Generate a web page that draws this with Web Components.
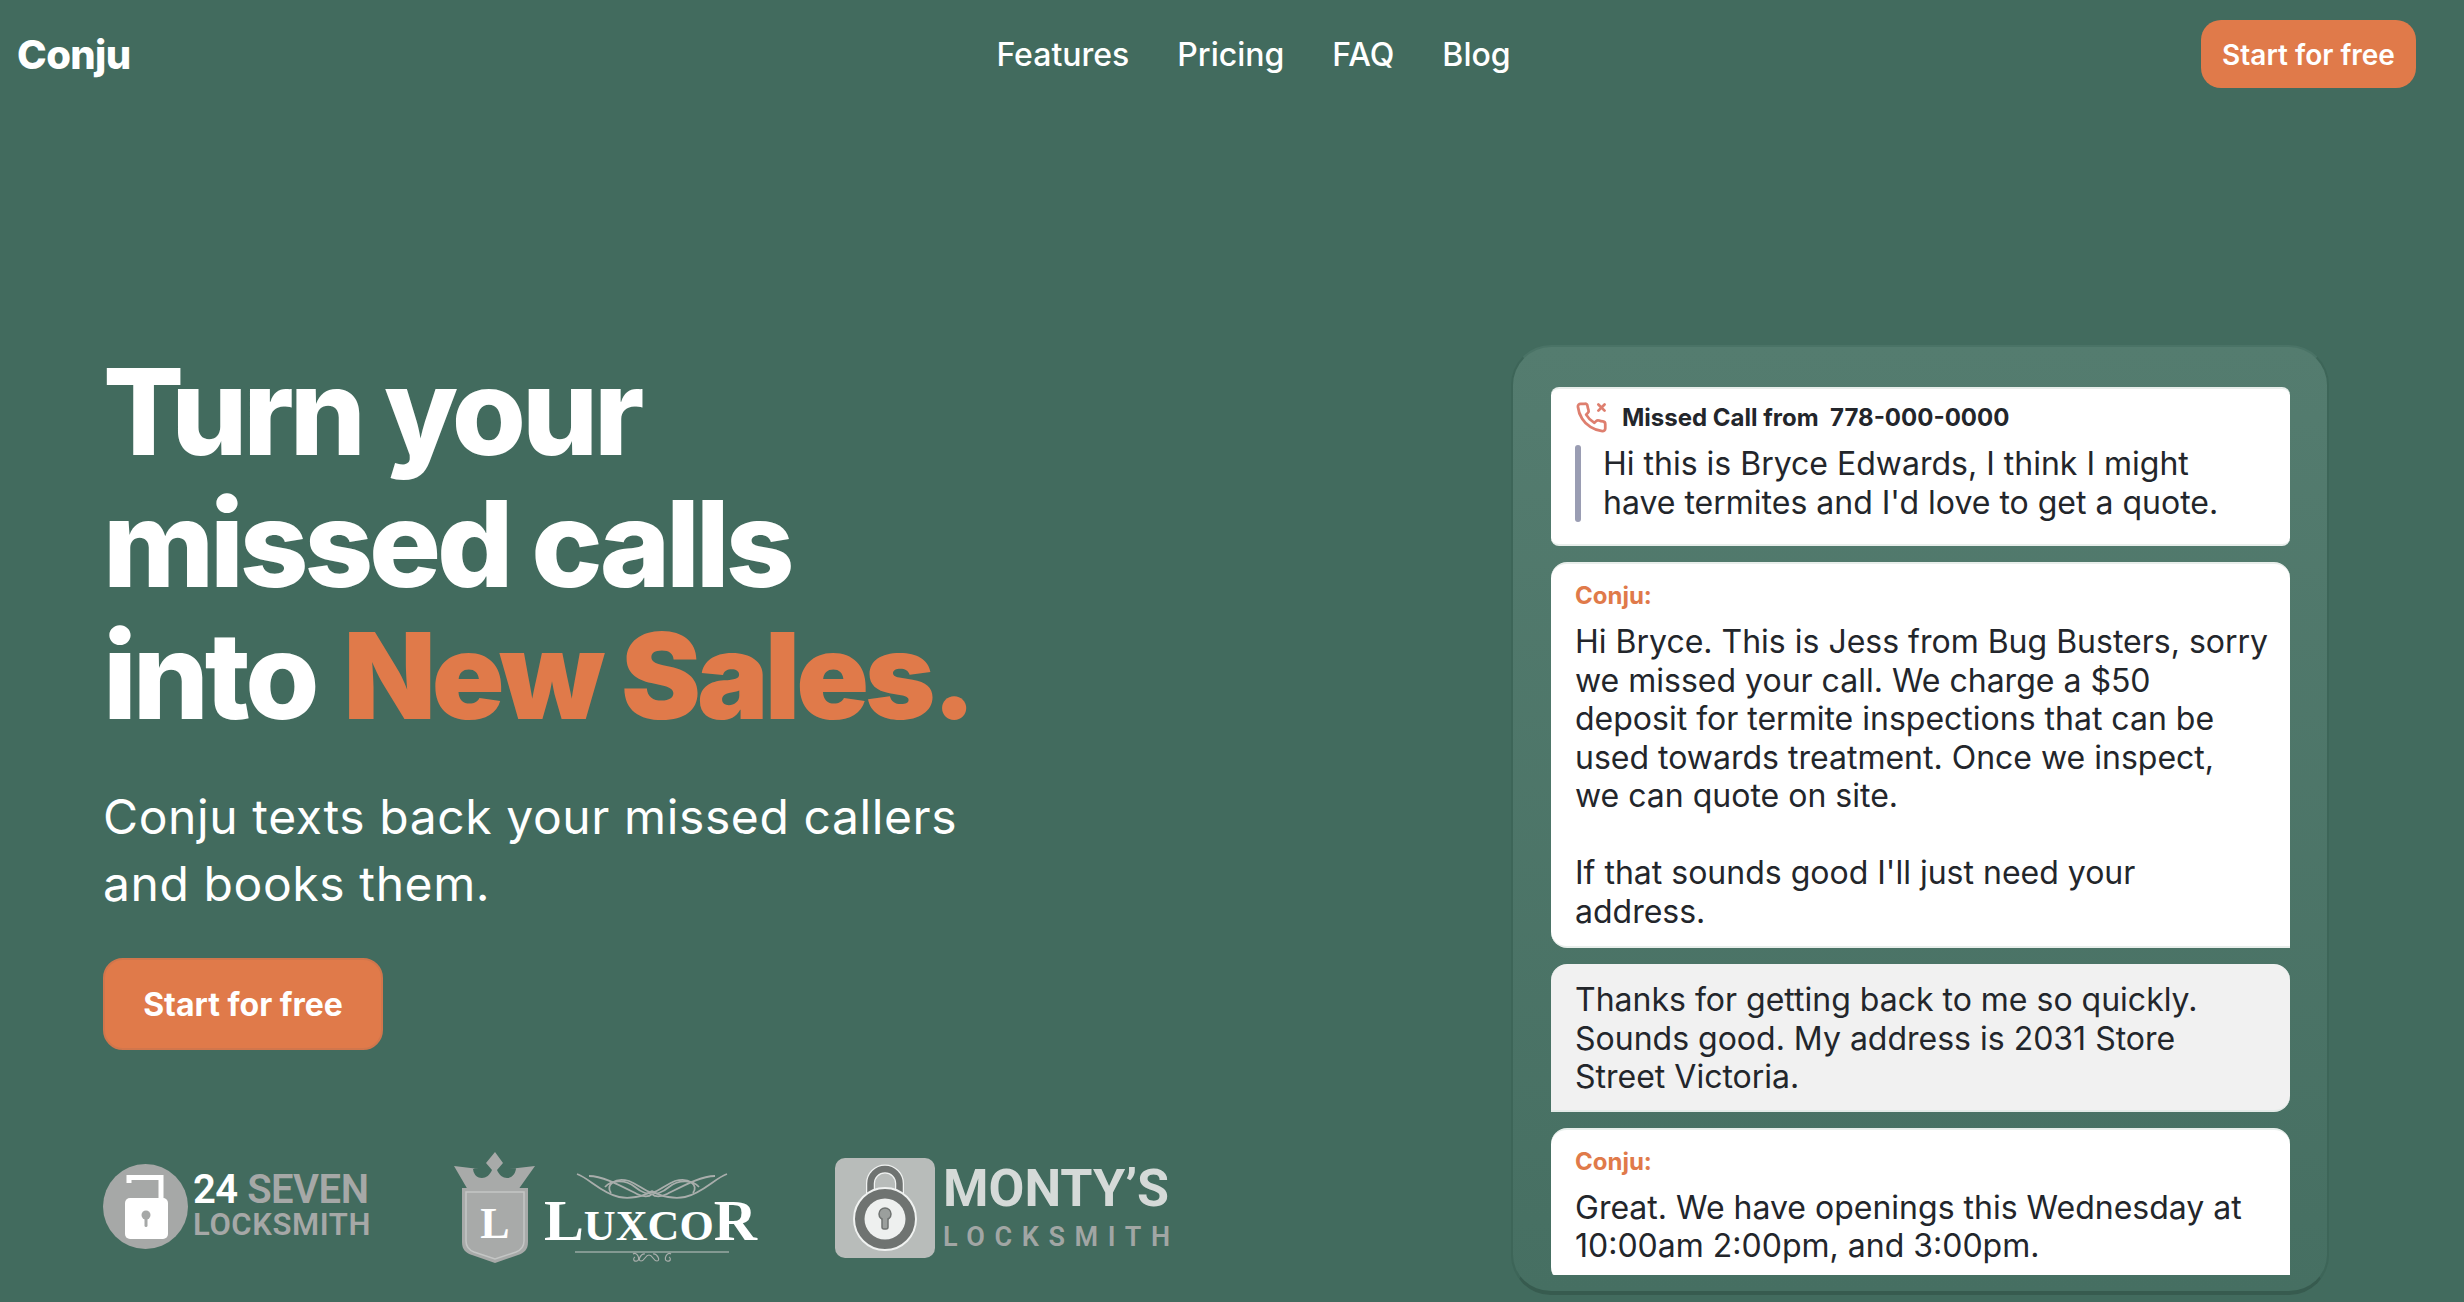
<!DOCTYPE html>
<html lang="en">
<head>
<meta charset="utf-8">
<title>Conju</title>
<style>
    html, body {
        margin: 0;
        height: 100%;
        overflow: hidden;
        background: #426b5e;
        font-family: Inter, "Liberation Sans", sans-serif;
    }
</style>
</head>
<body>
<site-nav></site-nav>
<hero-section>
    <hero-copy slot="copy"></hero-copy>
    <chat-panel slot="panel">
        <missed-call>Hi this is Bryce Edwards, I think I might have termites and I'd love to get a quote.</missed-call>
        <chat-bubble from="Conju:" corner="br">Hi Bryce. This is Jess from Bug Busters, sorry we missed your call. We charge a $50 deposit for termite inspections that can be used towards treatment. Once we inspect,<br>we can quote on site.<br><br>If that sounds good I'll just need your address.</chat-bubble>
        <chat-bubble corner="bl" tone="grey">Thanks for getting back to me so quickly. Sounds good. My address is 2031 Store Street Victoria.</chat-bubble>
        <chat-bubble from="Conju:" corner="br">Great. We have openings this Wednesday at 10:00am 2:00pm, and 3:00pm.</chat-bubble>
    </chat-panel>
</hero-section>

<script>
    function shadow(host, html) {
        host.attachShadow({mode: 'open'}).innerHTML = html;
    }

    class CtaButton extends HTMLElement {
        connectedCallback() {
            shadow(this, `
                <style>
                    :host {
                        display: inline-flex;
                        align-items: center;
                        justify-content: center;
                        background: #e07a4a;
                        color: #fff;
                        box-sizing: border-box;
                        font-family: Inter, sans-serif;
                    }
                    :host([size="small"]) {
                        width: 215px;
                        height: 68px;
                        border-radius: 20px;
                        font-size: 28px;
                        font-weight: 600;
                        padding-top: 2px;
                    }
                    :host([size="large"]) {
                        width: 280px;
                        height: 92px;
                        border-radius: 20px;
                        font-size: 32px;
                        font-weight: 700;
                        border: 2px solid #d1764c;
                    }
                </style>
                <slot></slot>`);
        }
    }
    customElements.define('cta-button', CtaButton);

    class SiteNav extends HTMLElement {
        connectedCallback() {
            shadow(this, `
                <style>
                    :host {
                        display: grid;
                        grid-template-columns: 1fr auto 1fr;
                        align-items: center;
                        height: 108px;
                        padding: 0 48px 0 17px;
                        color: #fff;
                    }
                    .brand { font-size: 40px; font-weight: 800; letter-spacing: -0.6px; }
                    .links { display: flex; gap: 48px; font-size: 32px; font-weight: 500; margin-left: 74px; }
                    .end { justify-self: end; }
                </style>
                <div class="brand">Conju</div>
                <div class="links"><span>Features</span><span>Pricing</span><span>FAQ</span><span>Blog</span></div>
                <div class="end"><cta-button size="small">Start for free</cta-button></div>`);
        }
    }
    customElements.define('site-nav', SiteNav);

    class HeroSection extends HTMLElement {
        connectedCallback() {
            shadow(this, `
                <style>
                    :host {
                        display: flex;
                        justify-content: space-between;
                        align-items: flex-start;
                        padding: 237px 135px 0 103px;
                    }
                </style>
                <slot name="copy"></slot>
                <slot name="panel"></slot>`);
        }
    }
    customElements.define('hero-section', HeroSection);

    class HeroCopy extends HTMLElement {
        connectedCallback() {
            shadow(this, `
                <style>
                    :host { display: block; color: #fff; padding-top: 1px; }
                    h1 {
                        margin: 0;
                        font-size: 120px;
                        line-height: 132px;
                        font-weight: 800;
                        letter-spacing: -4.2px;
                    }
                    h1 em {
                        font-style: normal;
                        color: #e07a4a;
                        font-weight: 900;
                        letter-spacing: -3.9px;
                        margin-left: 6px;
                    }
                    p {
                        margin: 41px 0 0;
                        font-size: 48px;
                        line-height: 67px;
                        letter-spacing: 0.6px;
                    }
                    cta-button { margin-top: 41px; }
                    logo-row { margin-top: 102px; }
                </style>
                <h1>Turn your<br>missed calls<br>into <em>New Sales.</em></h1>
                <p>Conju texts back your missed callers<br>and books them.</p>
                <cta-button size="large">Start for free</cta-button>
                <logo-row></logo-row>`);
        }
    }
    customElements.define('hero-copy', HeroCopy);

    class LogoRow extends HTMLElement {
        connectedCallback() {
            shadow(this, `
                <style>
                    :host { display: flex; align-items: flex-start; height: 125px; width: 1100px; }
                    logo-seven { margin-top: 12px; }
                    logo-luxcor { margin-left: 83px; }
                    logo-montys { margin-left: 77px; margin-top: 6px; }
                </style>
                <logo-seven></logo-seven>
                <logo-luxcor></logo-luxcor>
                <logo-montys></logo-montys>`);
        }
    }
    customElements.define('logo-row', LogoRow);

    class LogoSeven extends HTMLElement {
        connectedCallback() {
            shadow(this, `
                <style>
                    :host { display: flex; align-items: center; gap: 5px; font-family: Roboto, sans-serif; color: #a6a8a7; }
                    svg { display: block; }
                    .words { display: flex; flex-direction: column; margin-top: -1px; }
                    .top { font-size: 40px; line-height: 37px; font-weight: 600; letter-spacing: -0.5px; white-space: nowrap; }
                    .top b { font-weight: 600; color: #fff; }
                    .bottom { font-size: 31px; line-height: 33px; font-weight: 600; letter-spacing: 0.6px; }
                </style>
                <svg width="85" height="85" viewBox="0 0 85 85">
                    <circle cx="42.5" cy="42.5" r="42.5" fill="#a6a8a7"/>
                    <path d="M26 19V13.5H58V36" fill="none" stroke="#fff" stroke-width="5"/>
                    <rect x="22" y="34" width="43" height="41" rx="5" fill="#fff"/>
                    <circle cx="43" cy="51" r="4.5" fill="#a6a8a7"/>
                    <rect x="41.5" y="52" width="3" height="11" rx="1.5" fill="#a6a8a7"/>
                </svg>
                <div class="words">
                    <div class="top"><b>24</b> SEVEN</div>
                    <div class="bottom">LOCKSMITH</div>
                </div>`);
        }
    }
    customElements.define('logo-seven', LogoSeven);

    class LogoLuxcor extends HTMLElement {
        connectedCallback() {
            shadow(this, `
                <style>
                    :host { display: flex; align-items: flex-start; gap: 10px; }
                    svg { display: block; }
                    .mark { position: relative; width: 82px; height: 112px; }
                    .mark span {
                        position: absolute;
                        left: 0;
                        right: 0;
                        top: 46px;
                        text-align: center;
                        font: bold 44px "Liberation Serif", serif;
                        color: #fff;
                    }
                    .side { display: flex; flex-direction: column; align-items: center; width: 212px; padding-top: 21px; }
                    .name {
                        font-family: "Liberation Serif", serif;
                        font-weight: 700;
                        color: #fff;
                        line-height: 46px;
                        font-size: 57px;
                        white-space: nowrap;
                        margin-top: -2px;
                        transform: translateX(-2px) scaleX(1.05);
                    }
                    .name small { font-size: 42px; }
                    .rule { margin-top: 0; }
                </style>
                <div class="mark">
                    <svg width="82" height="112" viewBox="0 0 82 112">
                        <path d="M41 0l8 11-6 7c2 5 6 8 10 8 6 0 9-6 9-10l-7 1 26-3-17 24H14L0 14l25 3-6-1c0 5 3 10 9 10 4 0 8-3 10-8l-6-7z" fill="#a8aaa9"/>
                        <path d="M8 36h66v54c0 8-4 11-10 13l-23 8-23-8c-6-2-10-5-10-13z" fill="#a8aaa9"/>
                        <path d="M12 40h58v49c0 6-3 9-8 11l-21 7-21-7c-5-2-8-5-8-11z" fill="none" stroke="#c4c6c5" stroke-width="1.5"/>
                    </svg>
                    <span>L</span>
                </div>
                <div class="side">
                    <svg width="154" height="27" viewBox="0 0 154 27" fill="none" stroke="#a9aeac" stroke-width="1.8">
                        <path d="M2 1C14 5 26 20 44 24c10 2 24 0 33-6"/>
                        <path d="M14 3c14 0 32 10 48 18 6 3 12 3 15 0"/>
                        <path d="M30 14c6-7 20-8 30 0 6 5 14 9 17 4"/>
                        <path d="M36 20c-6-8 4-16 18-12 8 3 16 10 23 12"/>
                        <path d="M152 1c-12 4-24 19-42 23-10 2-24 0-33-6"/>
                        <path d="M140 3c-14 0-32 10-48 18-6 3-12 3-15 0"/>
                        <path d="M124 14c-6-7-20-8-30 0-6 5-14 9-17 4"/>
                        <path d="M118 20c6-8-4-16-18-12-8 3-16 10-23 12"/>
                    </svg>
                    <div class="name">L<small>UXCO</small>R</div>
                    <svg class="rule" width="154" height="14" viewBox="0 0 154 14" fill="none" stroke="#a9aeac" stroke-width="1.2">
                        <path d="M0 3H154" stroke="#c3c7c5"/>
                        <path d="M58 5c4-3 8 6 4 7s-4-3-2-4M70 5c-4-1-8 7-4 7s4-6 8-6 4 6 8 6 0-8-4-7M96 5c-4-3-8 6-4 7s4-3 2-4"/>
                    </svg>
                </div>`);
        }
    }
    customElements.define('logo-luxcor', LogoLuxcor);

    class LogoMontys extends HTMLElement {
        connectedCallback() {
            shadow(this, `
                <style>
                    :host { display: flex; align-items: flex-start; gap: 8px; font-family: Roboto, sans-serif; }
                    svg { display: block; }
                    .words { display: flex; flex-direction: column; }
                    .top { font-size: 52px; line-height: 60px; font-weight: 700; color: #d5dad8; margin-top: 1px; white-space: nowrap; }
                    .bottom { font-size: 27px; line-height: 32px; font-weight: 600; color: #a1a6a4; letter-spacing: 9.6px; margin-top: 2px; }
                </style>
                <svg width="100" height="100" viewBox="0 0 100 100">
                    <rect width="100" height="100" rx="10" fill="#b8bcba"/>
                    <path d="M35.5 42V25.5a14.5 14.5 0 0 1 29 0V42" fill="none" stroke="#f0f2f1" stroke-width="9"/>
                    <path d="M35.5 42V25.5a14.5 14.5 0 0 1 29 0V42" fill="none" stroke="#6f7371" stroke-width="6.5"/>
                    <circle cx="50" cy="61" r="31" fill="#6f7371" stroke="#f0f2f1" stroke-width="2"/>
                    <circle cx="50" cy="61" r="20.5" fill="#eef0ef"/>
                    <circle cx="50" cy="56" r="6" fill="#9b9f9d" stroke="#6f7371" stroke-width="1.5"/>
                    <rect x="47" y="57" width="6" height="14" rx="2" fill="#9b9f9d" stroke="#6f7371" stroke-width="1.5"/>
                    <circle cx="50" cy="56" r="5" fill="#9b9f9d"/>
                </svg>
                <div class="words">
                    <div class="top">MONTY’S</div>
                    <div class="bottom">LOCKSMITH</div>
                </div>`);
        }
    }
    customElements.define('logo-montys', LogoMontys);

    class ChatPanel extends HTMLElement {
        connectedCallback() {
            shadow(this, `
                <style>
                    :host {
                        display: block;
                        box-sizing: border-box;
                        width: 818px;
                        height: 950px;
                        padding: 40px 37px 16px 38px;
                        border-radius: 40px;
                        background: linear-gradient(#547c6f, #466f62);
                        border: 2px solid #3d6558;
                        border-top-color: #4a7366;
                        border-bottom: 4px solid #375b4f;
                    }
                    .scroll {
                        display: flex;
                        flex-direction: column;
                        gap: 16px;
                        height: 100%;
                        overflow: hidden;
                    }
                </style>
                <div class="scroll"><slot></slot></div>`);
        }
    }
    customElements.define('chat-panel', ChatPanel);

    class MissedCall extends HTMLElement {
        connectedCallback() {
            shadow(this, `
                <style>
                    :host {
                        display: block;
                        flex: none;
                        box-sizing: border-box;
                        background: #fff;
                        border-radius: 8px;
                        border-top: 2px solid #e8eeeb;
                        border-bottom: 2px solid #e8eeeb;
                        height: 159px;
                        padding: 12px 24px 0;
                        color: #23262b;
                    }
                    .head { display: flex; align-items: center; gap: 14px; font-size: 24px; font-weight: 700; height: 32px; }
                    svg { display: block; flex: none; }
                    blockquote {
                        margin: 12px 0 0;
                        padding-left: 28px;
                        font-size: 32px;
                        line-height: 38.5px;
                        position: relative;
                    }
                    blockquote::before {
                        content: '';
                        position: absolute;
                        left: 0;
                        top: 0;
                        bottom: 0;
                        width: 6px;
                        border-radius: 3px;
                        background: #9a9db3;
                    }
                </style>
                <div class="head">
                    <svg width="33" height="33" viewBox="0 0 24 24" fill="none" stroke="#de7f6f" stroke-width="2" stroke-linecap="round" stroke-linejoin="round">
                        <path d="M17 2.5l4.5 4.5M21.5 2.5L17 7"/>
                        <path d="M22 16.92v3a2 2 0 0 1-2.18 2 19.79 19.79 0 0 1-8.63-3.07 19.5 19.5 0 0 1-6-6 19.79 19.79 0 0 1-3.07-8.67A2 2 0 0 1 4.11 2h3a2 2 0 0 1 2 1.72 12.84 12.84 0 0 0 .7 2.81 2 2 0 0 1-.45 2.11L8.09 9.91a16 16 0 0 0 6 6l1.27-1.27a2 2 0 0 1 2.11-.45 12.84 12.84 0 0 0 2.81.7A2 2 0 0 1 22 16.92z"/>
                    </svg>
                    <span>Missed Call from&nbsp; 778-000-0000</span>
                </div>
                <blockquote><slot></slot></blockquote>`);
        }
    }
    customElements.define('missed-call', MissedCall);

    class ChatBubble extends HTMLElement {
        connectedCallback() {
            const from = this.getAttribute('from');
            shadow(this, `
                <style>
                    :host {
                        display: block;
                        flex: none;
                        box-sizing: border-box;
                        background: #fff;
                        border-radius: 16px;
                        border-top: 2px solid #e8eeeb;
                        border-bottom: 2px solid #e8eeeb;
                        padding: 17px 20px 15px 24px;
                        color: #23262b;
                        font-size: 32px;
                        line-height: 38.5px;
                    }
                    :host([corner="br"]) { border-bottom-right-radius: 0; }
                    :host([corner="bl"]) { border-bottom-left-radius: 0; }
                    :host([tone="grey"]) {
                        background: #f1f1f1;
                        border-color: #f1f1f1;
                        border-bottom-color: #e4eae7;
                        padding-top: 15px;
                        padding-bottom: 13px;
                    }
                    .from {
                        color: #e07a4a;
                        font-size: 24px;
                        font-weight: 700;
                        line-height: 30px;
                        margin-bottom: 12px;
                    }
                </style>
                ${from ? `<div class="from">${from}</div>` : ''}
                <div><slot></slot></div>`);
        }
    }
    customElements.define('chat-bubble', ChatBubble);
</script>
</body>
</html>
